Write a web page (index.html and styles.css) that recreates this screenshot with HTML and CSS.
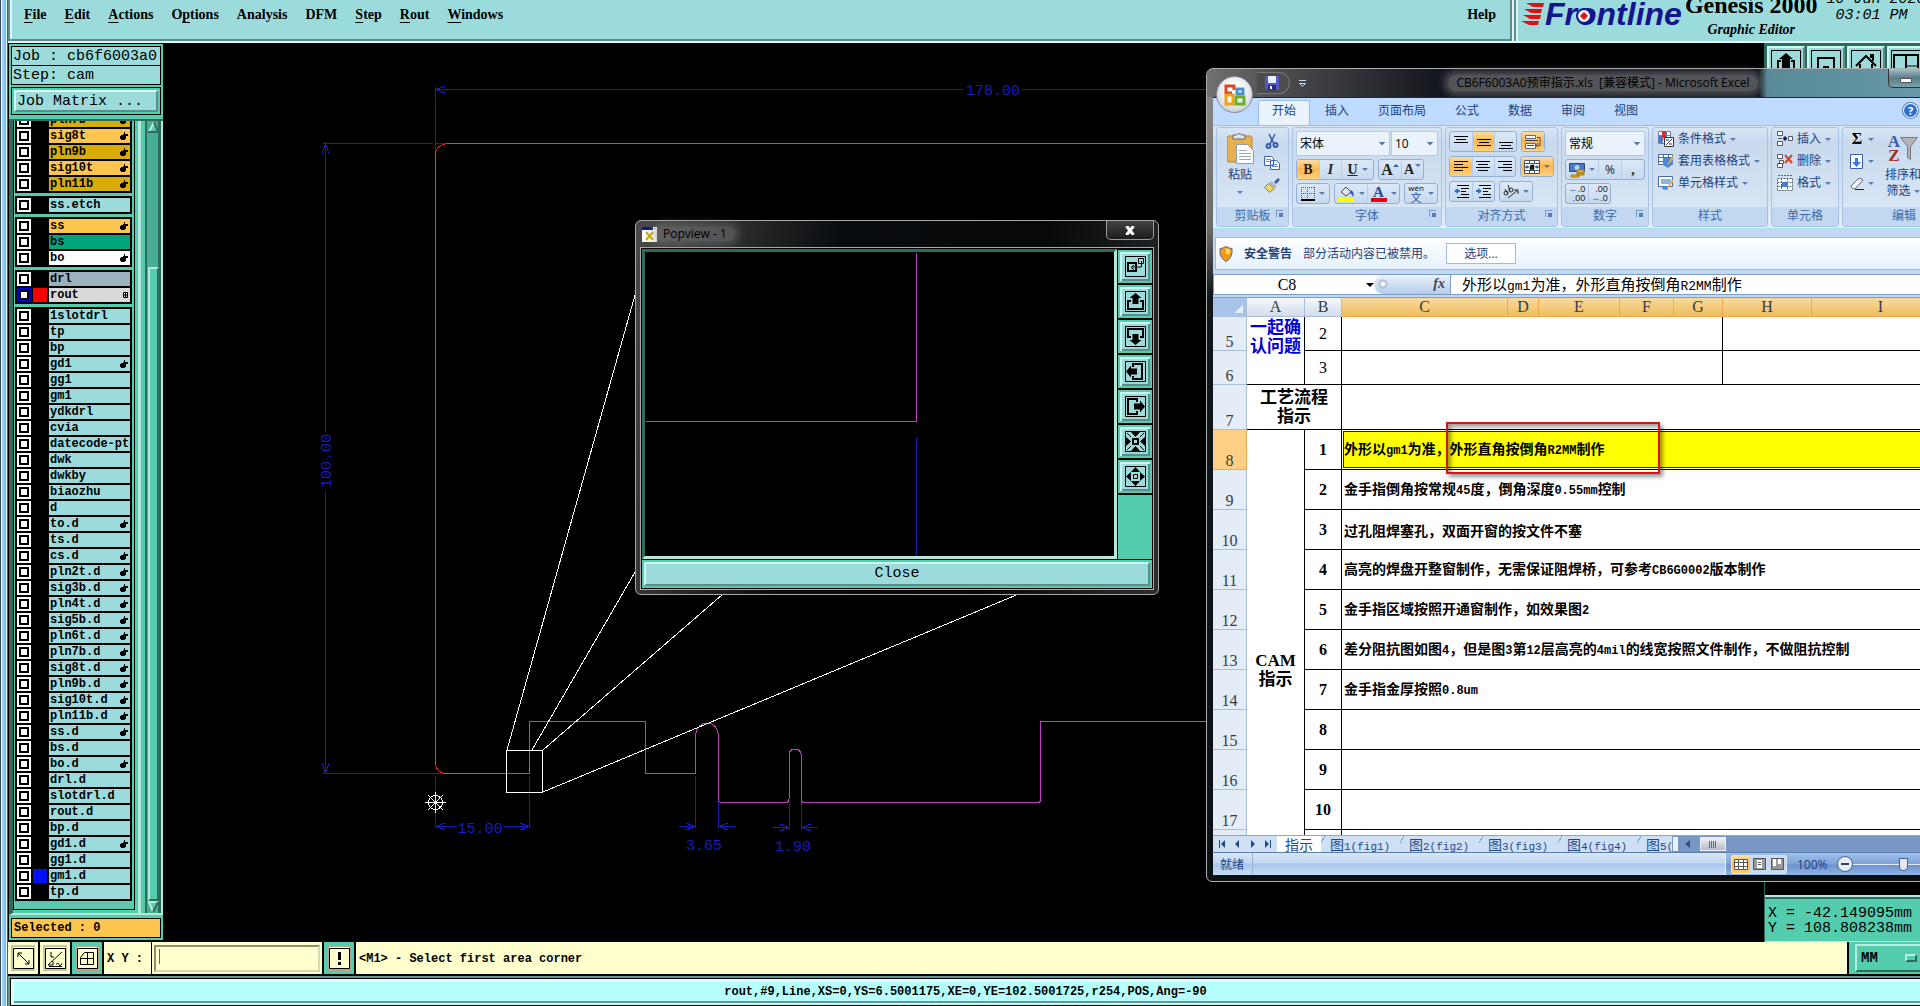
FILE: index.html
```
<!DOCTYPE html>
<html lang="zh-CN">

<head>
    <meta charset="UTF-8">
    <meta name="viewport" content="width=device-width, initial-scale=1.0">
    <title>Genesis 2000 - Graphic Editor</title>
    <link rel="stylesheet" href="styles.css">
</head>

<body>
    <div class="edge"></div>
    <div class="app">
        <header>
            <nav class="menubar">
                <a href="#"><u>F</u>ile</a>
                <a href="#"><u>E</u>dit</a>
                <a href="#"><u>A</u>ctions</a>
                <a href="#">O<u>p</u>tions</a>
                <a href="#">Analysis</a>
                <a href="#">DFM</a>
                <a href="#"><u>S</u>tep</a>
                <a href="#"><u>R</u>out</a>
                <a href="#"><u>W</u>indows</a>
                <a href="#" class="help">Help</a>
            </nav>
            <div class="brand">
                <div class="logo">
                    <svg width="24" height="24" viewBox="0 0 24 24">
                        <path fill="#e01010" d="M5 1h18l-1 4H12zM3 7h18l-1 4H10zM2 13h18l-1 4H9zM0 19h18l-1 4H8z" />
                    </svg>
                    <span>Frontline</span>
                    <svg class="dot" width="16" height="16" viewBox="0 0 16 16">
                        <circle cx="8" cy="8" r="7" fill="#e8f6f6" stroke="#14148c" stroke-width="2" />
                        <path fill="#e01010" d="M8 4l4 4-4 4-4-4z" />
                    </svg>
                </div>
                <div class="product">
                    <h1>Genesis 2000</h1>
                    <p>Graphic Editor</p>
                </div>
                <div class="clock">
                    <p>10 Jun 2020</p>
                    <p>03:01 PM</p>
                </div>
            </div>
        </header>

        <main>
            <aside class="sidebar">
                <p class="field">Job : cb6f6003a0</p>
                <p class="field">Step: cam</p>
                <div class="matrix"><button type="button">Job Matrix ...</button></div>
                <div class="layers">
                    <div class="view"></div>
                    <div class="track">
                        <svg width="11" height="12" viewBox="0 0 11 12">
                            <path fill="#54cdaf" d="M5.500 0L11 12H0z" />
                            <path fill="none" stroke="#b5efdf" stroke-width="2" d="M6 1L1 11" />
                            <path fill="none" stroke="#2f6b5c" stroke-width="2" d="M6 1l4 10H0" />
                        </svg>
                        <span class="thumb"></span>
                        <svg width="11" height="12" viewBox="0 0 11 12">
                            <path fill="#54cdaf" d="M0 0h11L5.500 12z" />
                            <path fill="none" stroke="#b5efdf" stroke-width="2" d="M10 1H1l4 10" />
                            <path fill="none" stroke="#2f6b5c" stroke-width="2" d="M5 11l5-10" />
                        </svg>
                    </div>
                </div>
                <p class="selected">Selected : 0</p>
            </aside>

            <section class="canvas">
                <svg class="board" width="100%" height="100%">
                    <g transform="translate(-163 -43)" fill="none" shape-rendering="crispEdges">
                        <!-- dimensions -->
                        <g stroke="#1a1ac0">
                            <path d="M435.500 87v65M435 89.500h529M1022 89.500h500M445 86l-9 3.500 9 3.500" />
                            <path d="M323 143.500h110M435 143.500h12M325.500 144v288M325.500 491v282M322 154l3.500-10 3.500 10M322 763l3.500 10 3.500-10M323 773.500h122" />
                            <path d="M435.500 776v52M529.500 776v52M436 826.500h21M503 826.500h26M445 823l-9 3.500 9 3.500M520 823l9 3.500-9 3.500" />
                            <path d="M695.500 776v52M718.500 800v28M679 826.500h16M719 826.500h16M686 823l9 3.500-9 3.500M728 823l-9 3.500 9 3.500" />
                            <path d="M789.500 800v30M801.500 800v30M773 827.500h16M802 827.500h16M780 824l9 3.500-9 3.500M811 824l-9 3.500 9 3.500" />
                        </g>
                        <!-- board outline -->
                        <path stroke="#c03cc0" d="M447 143.500h1100M435.500 153v611M444 773.500h85.500v-52h116v52h50V738c0-8 4-15 11.500-15s11.500 7 11.500 13v63q0 3.500 3 3.500h64q3.500 0 3.500-3.500v-45c0-3 3-5 6-5s6 2 6 5v45q0 3.500 3.500 3.500h233q3 0 3-3v-78h500" />
                        <path stroke="#d02020" d="M435.500 153q1-8 12-9.500M435.500 764q1 8 9 9.500" />
                        <!-- zoom area -->
                        <path stroke="#fff" d="M506.500 750.500h36v42h-36zM507 750L646 256M532 750L664 522M543 750L760 562M543 792L1050 581" />
                        <!-- datum -->
                        <path stroke="#fff" d="M425 802.500h21M428 795l15 15M443 795l-15 15" />
                        <circle cx="435.500" cy="802.500" r="7" stroke="#fff" />
                        <path stroke="#ffff40" d="M435.500 792v21" />
                    </g>
                    <g transform="translate(-163 -43)" class="dims">
                        <text x="993" y="95">178.00</text>
                        <text x="480" y="833">15.00</text>
                        <text x="704" y="850">3.65</text>
                        <text x="793" y="851">1.90</text>
                        <text transform="translate(331 461) rotate(-90)">100.00</text>
                    </g>
                </svg>
            </section>

            <aside class="right">
                <div class="tools">
                    <button type="button" aria-label="Pan up"><svg width="30" height="30" viewBox="0 0 30 30"><path fill="none" stroke="#000" d="M.5.500h29v29H.5z" /><path fill="none" stroke="#000" stroke-width="2" d="M10 11H7v14h16V11h-3" /><path d="M15 3l7 6h-3v9h-8V9H8z" /></svg></button>
                    <button type="button" aria-label="Pan down"><svg width="30" height="30" viewBox="0 0 30 30"><path fill="none" stroke="#000" d="M.5.500h29v29H.5z" /><path fill="none" stroke="#000" stroke-width="2" d="M11 21H7V8h16v13h-4" /><path d="M15 28l6-6h-3v-6h-6v6H9z" /></svg></button>
                    <button type="button" aria-label="Home"><svg width="30" height="30" viewBox="0 0 30 30"><path fill="none" stroke="#000" d="M.5.500h29v29H.5z" /><path fill="none" stroke="#000" stroke-width="2" d="M5 16L15 6l10 10M9 14v11h12V14M20 8V5h2v6" /></svg></button>
                    <button type="button" aria-label="Split view"><svg width="30" height="30" viewBox="0 0 30 30"><path fill="none" stroke="#000" d="M.5.500h29v29H.5zM16 16h12M16 20h12" /><path fill="none" stroke="#000" stroke-width="2" d="M3 5h24v20H3zM15 5v20" /></svg></button>
                </div>
                <div class="coords">
                    <p>X = -42.149095mm</p>
                    <p>Y = 108.808238mm</p>
                </div>
            </aside>
        </main>

        <div class="command">
            <button type="button" aria-label="Snap to line"><svg width="21" height="21" viewBox="0 0 21 21"><path fill="none" stroke="#000" d="M.5.500h20v20H.5zM5 5l11 11M5 9V5h4M16 12v4h-4" /></svg></button>
            <button type="button" aria-label="Snap to angle"><svg width="21" height="21" viewBox="0 0 21 21"><path fill="none" stroke="#000" d="M.5.500h20v20H.5zM3 17L17 4M3 17h5q1-3-1-4M6 4v5h3M11 16.500q2-3 3 0t3-1M4 18.500h13" /></svg></button>
            <button type="button" class="on" aria-label="Snap to grid"><svg width="21" height="21" viewBox="0 0 21 21"><path fill="none" stroke="#000" d="M.5.500h20v20H.5zM3.500 9.500l4-5h9v12h-13zM3 10.500h14M10.500 4v13" /></svg></button>
            <label for="xy">X Y :</label>
            <div class="entry"><input id="xy" type="text"></div>
            <button type="button" class="on bang" aria-label="Alert"><svg width="21" height="21" viewBox="0 0 21 21"><path fill="none" stroke="#000" d="M.5.500h20v20H.5z" /><path d="M9 4h3v8H9zM9 14h3v3H9z" /></svg></button>
            <p class="prompt">&lt;M1&gt; - Select first area corner</p>
            <div class="units">
                <select aria-label="Units">
                    <option>MM</option>
                    <option>INCH</option>
                </select>
                <span class="knob"></span>
            </div>
        </div>

        <footer>
            <p>rout,#9,Line,XS=0,YS=6.5001175,XE=0,YE=102.5001725,r254,POS,Ang=-90</p>
        </footer>
    </div>

    <!-- Popview -->
    <section class="popview">
        <div class="pop_title">
            <svg width="15" height="15" viewBox="0 0 15 15"><path fill="#fff" d="M0 0h15v15H0z" /><path fill="#14148c" d="M0 0h11v3H0z" /><path fill="#aab" d="M12 1h2v1h-2z" /><path stroke="#c8b400" stroke-width="2" d="M4 5l7 8M11 5l-7 8" /></svg>
            <h2>Popview - 1</h2>
            <button type="button" aria-label="Close window"><svg width="10" height="9" viewBox="0 0 10 9"><path stroke="#fff" stroke-width="3" d="M1.500 0l7 9M8.500 0l-7 9" /></svg></button>
        </div>
        <div class="pop_body">
            <div class="pop_main">
                <div class="pop_view">
                    <svg width="100%" height="100%" shape-rendering="crispEdges" fill="none">
                        <path stroke="#c03cc0" d="M1 169.500h270.500V1" />
                        <path stroke="#1a1ab0" d="M271.500 186v200" />
                    </svg>
                </div>
                <div class="pop_tools">
                    <button type="button" aria-label="Zoom window"><svg width="21" height="21" viewBox="0 0 21 21"><path fill="none" stroke="#000" d="M.5.500h20v20H.5zM13.500 2.500h5v5h-5zM16.500 5v6h-9M9 9l-3 2.500 3 2" /><path fill="none" stroke="#000" stroke-width="2" d="M3 7h8v8H3z" /></svg></button>
                    <button type="button" aria-label="Up"><svg width="21" height="21" viewBox="0 0 21 21"><path fill="none" stroke="#000" d="M.5.500h20v20H.5z" /><path fill="none" stroke="#000" stroke-width="2" d="M6 10H3v8h15v-8h-3" /><path d="M10.500 2l6 5h-3v6h-6V7h-3z" /></svg></button>
                    <button type="button" aria-label="Down"><svg width="21" height="21" viewBox="0 0 21 21"><path fill="none" stroke="#000" d="M.5.500h20v20H.5z" /><path fill="none" stroke="#000" stroke-width="2" d="M6 11H3V3h15v8h-3" /><path d="M10.500 19l6-5h-3V8h-6v6h-3z" /></svg></button>
                    <button type="button" aria-label="Left"><svg width="21" height="21" viewBox="0 0 21 21"><path fill="none" stroke="#000" d="M.5.500h20v20H.5z" /><path fill="none" stroke="#000" stroke-width="2" d="M8 6V3h9v15H8v-3" /><path d="M1 10.500l5-6v3h6v6H6v3z" /></svg></button>
                    <button type="button" aria-label="Right"><svg width="21" height="21" viewBox="0 0 21 21"><path fill="none" stroke="#000" d="M.5.500h20v20H.5z" /><path fill="none" stroke="#000" stroke-width="2" d="M12 6V3H3v15h9v-3" /><path d="M20 10.500l-5-6v3H9v6h6v3z" /></svg></button>
                    <button type="button" aria-label="Zoom in"><svg width="21" height="21" viewBox="0 0 21 21"><path fill="none" stroke="#000" d="M.5.500h20v20H.5zM2 2l4 4M19 2l-4 4M2 19l4-4M19 19l-4-4" /><path fill="none" stroke="#000" stroke-width="2" d="M8 8h5v5H8z" /><path d="M6 1h9l-4.500 5zM6 20h9l-4.500-5zM1 6v9l5-4.500zM20 6v9l-5-4.500z" /></svg></button>
                    <button type="button" aria-label="Zoom out"><svg width="21" height="21" viewBox="0 0 21 21"><path fill="none" stroke="#000" d="M.5.500h20v20H.5zM8.500 8.500h4v4h-4z" /><path d="M6 6h9l-4.500-5zM6 15h9l-4.500 5zM6 6v9l-5-4.500zM15 6v9l5-4.500z" /></svg></button>
                </div>
            </div>
            <div class="pop_close"><button type="button">Close</button></div>
        </div>
    </section>

    <!-- Excel -->
    <section class="excel">
        <div class="xl_title">
            <div class="qat">
                <button type="button" aria-label="保存"><svg width="14" height="14" viewBox="0 0 14 14"><path fill="#5558c0" d="M0 0h14v14H2l-2-2z" /><path fill="#e8f0ff" d="M3 0h8v7H3z" /><path fill="#2a2c80" d="M3 9h8v5H3z" /><path fill="#fff" d="M5 10h2v3H5z" /></svg></button>
                <svg class="more" width="9" height="9" viewBox="0 0 9 9"><path fill="none" stroke="#cde" d="M1 1.500h7M1.500 4.500h6l-3 3z" /></svg>
            </div>
            <h2>CB6F6003A0预审指示.xls &nbsp;[兼容模式] - Microsoft Excel</h2>
            <div class="winbtns">
                <button type="button" aria-label="最小化"><svg width="12" height="5" viewBox="0 0 12 5"><path fill="#fff" stroke="#555" d="M.5.500h11v4H.5z" /></svg></button>
                <button type="button" aria-label="最大化"></button>
                <button type="button" aria-label="关闭"></button>
            </div>
        </div>
        <button type="button" class="office" aria-label="Office">
            <svg width="24" height="24" viewBox="0 0 24 24" fill="none" stroke-width="3">
                <path stroke="#d8481c" d="M9 10H3V3h8v4" />
                <path stroke="#4a90d0" d="M14 6h6v5h-6z" />
                <path stroke="#f0a020" d="M3 12h7v9H3z" />
                <path stroke="#6ab02c" d="M13 14h8v7h-8z" />
            </svg>
        </button>

        <nav class="tabs">
            <a href="#" class="on">开始</a>
            <a href="#">插入</a>
            <a href="#">页面布局</a>
            <a href="#">公式</a>
            <a href="#">数据</a>
            <a href="#">审阅</a>
            <a href="#">视图</a>
            <span class="q">?</span>
        </nav>

        <div class="ribbon">
            <div class="group clip">
                <div class="body">
                    <button type="button" class="big">
                        <svg width="27" height="31" viewBox="0 0 27 31"><rect y="3" width="25" height="26" rx="2" fill="#e9b04e" stroke="#b9812c" /><path fill="#e4e8ee" stroke="#667" d="M6 2h3q3-3 6 0h3v4H6z" /><path fill="#fff" stroke="#8a9ab8" d="M9.500 11.500h11l6 6v13h-17z" /><path stroke="#9ab" d="M12 17.500h8M12 20.500h12M12 23.500h12M12 26.500h12" /></svg>
                        <span>粘贴</span>
                        <i class="ar"></i>
                    </button>
                    <div class="stack">
                        <button type="button" aria-label="剪切"><svg width="16" height="16" viewBox="0 0 16 16" fill="none" stroke="#3a5ca8"><path stroke-width="1.500" d="M5 1l5 10M11 1L6 11" /><circle cx="4.500" cy="13" r="2" stroke-width="2" /><circle cx="11.500" cy="12" r="2" stroke-width="2" /></svg></button>
                        <button type="button" aria-label="复制"><svg width="16" height="16" viewBox="0 0 16 16"><path fill="#fff" stroke="#3a64b0" d="M.5 1.500h7l2 2v7h-9zM6.500 5.500h6l3 3v6h-9z" /><path stroke="#6a8cd0" d="M2 4.500h5M2 6.500h4M8 9.500h5M8 11.500h6" /></svg></button>
                        <button type="button" aria-label="格式刷"><svg width="16" height="16" viewBox="0 0 16 16"><path fill="#4a5a9a" d="M10 5l4-4 2 2-4 4z" /><path fill="#aab8d8" d="M7 4l6 5-2 2-6-5z" /><path fill="#f0d868" stroke="#a08020" d="M4.500 6.500l6 5-5 4-5-5z" /></svg></button>
                    </div>
                </div>
                <p>剪贴板<i class="dlg"></i></p>
            </div>

            <div class="group font">
                <div class="body col">
                    <div class="line tall">
                        <select aria-label="字体"><option>宋体</option></select>
                        <select aria-label="字号" class="size"><option>10</option></select>
                    </div>
                    <div class="line">
                        <div class="set">
                            <button type="button" class="hot"><b>B</b></button>
                            <button type="button"><b><em>I</em></b></button>
                            <button type="button" class="wide"><b><u>U</u></b><i class="ar"></i></button>
                        </div>
                        <div class="set">
                            <button type="button"><b class="lg">A</b><i class="ar up"></i></button>
                            <button type="button"><b>A</b><i class="ar raise"></i></button>
                        </div>
                    </div>
                    <div class="line between">
                        <div class="set">
                            <button type="button" class="wide" aria-label="边框"><svg width="14" height="14" viewBox="0 0 14 14" fill="none" stroke="#556"><path stroke-dasharray="1 1" d="M.5 0v13M6.500 0v13M13.500 0v13M0 .5h14M0 6.500h14" /><path stroke="#000" stroke-width="2" d="M0 13h14" /></svg><i class="ar"></i></button>
                        </div>
                        <div class="set">
                            <button type="button" class="wide" aria-label="填充颜色"><svg width="17" height="17" viewBox="0 0 17 17"><path fill="#dfe6f2" stroke="#445" d="M3 7l5-5 5 5-5 4z" /><path fill="#3a5cb0" d="M13 5q4 2 2 7-1-3-3-4z" /><path fill="#ff0" d="M0 13h16v4H0z" /></svg><i class="ar"></i></button>
                            <button type="button" class="wide" aria-label="字体颜色"><span class="fc">A</span><i class="ar"></i></button>
                        </div>
                        <div class="set">
                            <button type="button" class="wide"><span class="wen"><small>wén</small>文</span><i class="ar"></i></button>
                        </div>
                    </div>
                </div>
                <p>字体<i class="dlg"></i></p>
            </div>

            <div class="group align">
                <div class="body col">
                    <div class="line">
                        <div class="set">
                            <button type="button" aria-label="顶端对齐"><svg width="14" height="14" viewBox="0 0 14 14"><path stroke="#000" d="M0 1.500h14M2 4.500h10M0 7.500h14" /></svg></button>
                            <button type="button" class="hot" aria-label="垂直居中"><svg width="14" height="14" viewBox="0 0 14 14"><path stroke="#000" d="M0 4.500h14M2 7.500h10M0 10.500h14" /></svg></button>
                            <button type="button" aria-label="底端对齐"><svg width="14" height="14" viewBox="0 0 14 14"><path stroke="#000" d="M0 7.500h14M2 10.500h10M0 13.500h14" /></svg></button>
                        </div>
                        <div class="set"><button type="button" class="hot" aria-label="自动换行"><svg width="16" height="16" viewBox="0 0 16 16"><path fill="#fff" stroke="#667" d="M.5 1.500h10v3H.5zM.5 9.500h10v5H.5z" /><path fill="none" stroke="#445" d="M12 3.500h3v8h-3M2 11.500h7M13 9l-2 2.500 2 2M0 6.500h13" /></svg></button></div>
                    </div>
                    <div class="line">
                        <div class="set">
                            <button type="button" class="hot" aria-label="左对齐"><svg width="14" height="14" viewBox="0 0 14 14"><path stroke="#000" d="M0 1.500h14M0 4.500h9M0 7.500h14M0 10.500h9" /></svg></button>
                            <button type="button" aria-label="居中"><svg width="14" height="14" viewBox="0 0 14 14"><path stroke="#000" d="M0 1.500h14M2 4.500h10M0 7.500h14M2 10.500h10" /></svg></button>
                            <button type="button" aria-label="右对齐"><svg width="14" height="14" viewBox="0 0 14 14"><path stroke="#000" d="M0 1.500h14M5 4.500h9M0 7.500h14M5 10.500h9" /></svg></button>
                        </div>
                        <div class="set"><button type="button" class="hot wide" aria-label="合并后居中"><svg width="16" height="14" viewBox="0 0 16 14"><path fill="#fff" stroke="#456" d="M.5.500h15v13H.5zM.5 3.500h15M.5 10.500h15M5.500 0v3M10.500 0v3M5.500 11v3M10.500 11v3" /><path stroke="#124" d="M1 7h4M11 7h4M3 5.500v3M13 5.500v3" /><path fill="none" stroke="#000" stroke-width="1.500" d="M6.500 5.500h3v3.500h-3v-2h3" /></svg><i class="ar"></i></button></div>
                    </div>
                    <div class="line">
                        <div class="set">
                            <button type="button" aria-label="减少缩进"><svg width="15" height="13" viewBox="0 0 15 13"><path stroke="#000" d="M3 .5h12M7 3.500h8M7 6.500h5M7 9.500h8M3 12.500h12" /><path fill="#3a6cc8" d="M0 6l4-3v2h2v2H4v2z" /></svg></button>
                            <button type="button" aria-label="增加缩进"><svg width="15" height="13" viewBox="0 0 15 13"><path stroke="#000" d="M3 .5h12M7 3.500h8M7 6.500h5M7 9.500h8M3 12.500h12" /><path fill="#3a6cc8" d="M6 6L2 3v2H0v2h2v2z" /></svg></button>
                        </div>
                        <div class="set"><button type="button" class="wide" aria-label="方向"><svg width="16" height="14" viewBox="0 0 16 14" fill="none" stroke="#223"><path d="M5 13L15 5M15 9V5h-4" /><circle cx="3" cy="8" r="2" /><circle cx="8" cy="5" r="2" /><path d="M2 4l3 5M5 0l2 6" /></svg><i class="ar"></i></button></div>
                    </div>
                </div>
                <p>对齐方式<i class="dlg"></i></p>
            </div>

            <div class="group num">
                <div class="body col">
                    <div class="line tall"><select aria-label="数字格式"><option>常规</option></select></div>
                    <div class="line">
                        <div class="set grow">
                            <button type="button" class="wide" aria-label="会计数字格式"><svg width="16" height="16" viewBox="0 0 16 16"><path fill="#4a78c8" stroke="#2a4a90" d="M.5 1.500h15v8H.5z" /><circle cx="8" cy="5.500" r="2.500" fill="#bcd0f4" /><path fill="#f0b830" stroke="#a87810" d="M8 8h7v3H8zM8 11h7v2H8zM2 13h8v2H2z" /></svg><i class="ar"></i></button>
                            <button type="button">%</button>
                            <button type="button"><b>,</b></button>
                        </div>
                    </div>
                    <div class="line">
                        <div class="set">
                            <button type="button"><span class="dec"><span><s>←</s>.0</span><span>.00</span></span></button>
                            <button type="button"><span class="dec"><span>.00</span><span><s>→</s>.0</span></span></button>
                        </div>
                    </div>
                </div>
                <p>数字<i class="dlg"></i></p>
            </div>

            <div class="group style">
                <div class="body list">
                    <button type="button"><svg width="16" height="16" viewBox="0 0 16 16"><path fill="#fff" stroke="#6a86b8" d="M.5.500h12v12H.5zM4.500 0v12M8.500 0v12M0 4.500h12M0 8.500h12" /><path fill="#d83020" d="M4 0h4v7H4z" /><path fill="#4878c8" d="M1 5h3v7H1z" /><path fill="#fff" stroke="#334" d="M6.500 6.500h9v9h-9z" /><path stroke="#334" d="M8 9h3M11 13h3M8 14l6-6" /></svg>条件格式<i class="ar"></i></button>
                    <button type="button"><svg width="16" height="16" viewBox="0 0 16 16"><path fill="#fff" stroke="#4a6aa8" d="M.5 1.500h14v10H.5zM5.500 1v10M10.500 1v10M0 4.500h14M0 8.500h14" /><path fill="#4a88d8" d="M5 5h10v6l-5 4-5-3z" /><path fill="#e8b040" d="M14 3l2 2-5 6-2 1z" /></svg>套用表格格式<i class="ar"></i></button>
                    <button type="button"><svg width="16" height="16" viewBox="0 0 16 16"><path fill="#fff" stroke="#4a6aa8" d="M.5 1.500h14v10H.5z" /><path fill="#88b4e8" d="M3 4h10v5H3z" /><path fill="#4a88d8" d="M5 11h6l-2 4-5-1z" /><path fill="#e8b040" d="M14 4l2 2-5 6-2 1z" /></svg>单元格样式<i class="ar"></i></button>
                </div>
                <p>样式</p>
            </div>

            <div class="group cells">
                <div class="body list">
                    <button type="button"><svg width="16" height="16" viewBox="0 0 16 16" fill="#fff" stroke="#556"><path d="M.5.500h5v4h-5zM.5 10.500h5v4h-5zM1 7.500h4M11.500 5.500h4v4h-4z" /><path stroke="#125" stroke-width="2" d="M6 7.500h4M8 5.500v4" /></svg>插入<i class="ar"></i></button>
                    <button type="button"><svg width="16" height="16" viewBox="0 0 16 16" fill="#fff" stroke="#556"><path d="M.5 1.500h5v4h-5zM.5 10.500h5v4h-5zM2.500 7.500h4v3h-4z" /><path stroke="#e04020" stroke-width="2" d="M8 2l7 8M15 2L8 10" /></svg>删除<i class="ar"></i></button>
                    <button type="button"><svg width="16" height="16" viewBox="0 0 16 16" fill="#fff" stroke="#567"><path d="M.5 3.500h15v12H.5zM.5 7.500h15M.5 11.500h15M4.500 3v12M10.500 3v12M1 .5h14" stroke-dasharray="2 1" /><path fill="#4a80d0" stroke="none" d="M5 7h6v5H5z" /></svg>格式<i class="ar"></i></button>
                </div>
                <p>单元格</p>
            </div>

            <div class="group edit">
                <div class="body">
                    <div class="list">
                        <button type="button"><b class="sum">Σ</b><i class="ar"></i></button>
                        <button type="button" aria-label="填充"><svg width="14" height="15" viewBox="0 0 14 15"><path fill="#fff" stroke="#3a5ca8" d="M.5.500h12v14H.5z" /><path fill="#3a78d8" d="M5 4h3v4h3l-4.500 5L2 8h3z" /></svg><i class="ar"></i></button>
                        <button type="button" aria-label="清除"><svg width="14" height="13" viewBox="0 0 14 13"><path fill="#f4f4f8" stroke="#667" d="M1 9l7-7q3-2 5 1l-7 8q-4 2-5-2z" /><path stroke="#223" d="M5 12.500h9" /></svg><i class="ar"></i></button>
                    </div>
                    <button type="button" class="big sort">
                        <span class="az"><span><b>A</b><b>Z</b></span><svg width="18" height="24" viewBox="0 0 18 24"><path fill="#b4b4b8" stroke="#77777c" d="M.5.500h17l-7 9v13l-3-2V9.500z" /></svg></span>
                        <span>排序和</span>
                        <span class="pick">筛选<i class="ar"></i></span>
                    </button>
                </div>
                <p>编辑</p>
            </div>
        </div>

        <div class="warn">
            <svg width="14" height="16" viewBox="0 0 14 16"><path fill="#f79a1c" stroke="#667" d="M7 .5q3 2 6 2 1 9-6 13Q0 11.500 1 2.500q3 0 6-2z" /><path fill="#ffd45c" d="M7 2q2 1 4 1.500V8H7z" /></svg>
            <strong>安全警告</strong>
            <span>部分活动内容已被禁用。</span>
            <button type="button">选项...</button>
        </div>

        <div class="formula">
            <div class="name"><input type="text" value="C8" aria-label="名称框"><i class="ar"></i></div>
            <div class="fx"><em>fx</em></div>
            <p>外形以<span class="en">gm1</span>为准，外形直角按倒角<span class="en">R2MM</span>制作</p>
        </div>

        <div class="sheet">
            <table>
                <colgroup>
                    <col class="c0"><col class="ca"><col class="cb"><col class="cc"><col class="cd"><col class="ce"><col class="cf"><col class="cg"><col class="ch"><col class="ci"><col>
                </colgroup>
                <thead>
                    <tr><th class="corner"></th><th>A</th><th>B</th><th class="sel">C</th><th class="sel">D</th><th class="sel">E</th><th class="sel">F</th><th class="sel">G</th><th class="sel">H</th><th class="sel">I</th><th></th></tr>
                </thead>
                <tbody>
                    <tr class="short"><th>5</th><td class="blue" rowspan="2">一起确<br>认问题</td><td>2</td><td colspan="5"></td><td colspan="3"></td></tr>
                    <tr class="short"><th>6</th><td>3</td><td colspan="5"></td><td colspan="3"></td></tr>
                    <tr class="flow"><th>7</th><td class="bold" colspan="2">工艺流程<br>指示</td><td colspan="8"></td></tr>
                    <tr class="cur"><th>8</th><td class="bold" rowspan="11">CAM<br>指示</td><td>1</td><td colspan="8" class="txt active">外形以<span class="en">gm1</span>为准，外形直角按倒角<span class="en">R2MM</span>制作</td></tr>
                    <tr><th>9</th><td>2</td><td colspan="8" class="txt">金手指倒角按常规<span class="en">45</span>度，倒角深度<span class="en">0.55mm</span>控制</td></tr>
                    <tr><th>10</th><td>3</td><td colspan="8" class="txt">过孔阻焊塞孔，双面开窗的按文件不塞</td></tr>
                    <tr><th>11</th><td>4</td><td colspan="8" class="txt">高亮的焊盘开整窗制作，无需保证阻焊桥，可参考<span class="en">CB6G0002</span>版本制作</td></tr>
                    <tr><th>12</th><td>5</td><td colspan="8" class="txt">金手指区域按照开通窗制作，如效果图<span class="en">2</span></td></tr>
                    <tr><th>13</th><td>6</td><td colspan="8" class="txt">差分阻抗图如图<span class="en">4</span>，但是图<span class="en">3</span>第<span class="en">12</span>层高亮的<span class="en">4mil</span>的线宽按照文件制作，不做阻抗控制</td></tr>
                    <tr><th>14</th><td>7</td><td colspan="8" class="txt">金手指金厚按照<span class="en">0.8um</span></td></tr>
                    <tr><th>15</th><td>8</td><td colspan="8"></td></tr>
                    <tr><th>16</th><td>9</td><td colspan="8"></td></tr>
                    <tr><th>17</th><td>10</td><td colspan="8"></td></tr>
                    <tr class="rest"><th></th><td></td><td colspan="8"></td></tr>
                </tbody>
            </table>
            <div class="mark"></div>
        </div>

        <div class="sheets">
            <div class="arrows">
                <svg width="64" height="16" viewBox="0 0 64 16" fill="#1d4a8c"><path d="M6 4h1v8H6zM12 4v8L8 8zM26 4v8l-4-4zM38 4v8l4-4zM52 4v8l4-4zM57 4h1v8h-1z" /></svg>
            </div>
            <a href="#" class="on">指示</a>
            <a href="#">图<span class="en">1(fig1)</span></a>
            <a href="#">图<span class="en">2(fig2)</span></a>
            <a href="#">图<span class="en">3(fig3)</span></a>
            <a href="#">图<span class="en">4(fig4)</span></a>
            <a href="#" class="cut">图<span class="en">5(</span></a>
            <div class="hscroll"><i class="split"></i><i class="la"></i><i class="hthumb"></i></div>
        </div>

        <div class="status">
            <span class="ready">就绪</span>
            <div class="zoom">
                <div class="views">
                    <button type="button" class="hot" aria-label="普通"><svg width="14" height="11" viewBox="0 0 14 11"><path fill="#fff" stroke="#555" d="M.5.500h13v10H.5zM.5 3.500h13M.5 7.500h13M4.500 0v11M9.500 0v11" /></svg></button>
                    <button type="button" aria-label="页面布局"><svg width="13" height="12" viewBox="0 0 13 12"><path fill="#999" stroke="#555" d="M.5.500h12v11H.5z" /><path fill="#fff" d="M4 2h5v8H4z" /><path stroke="#555" d="M5 4.500h3M5 6.500h3" /></svg></button>
                    <button type="button" aria-label="分页预览"><svg width="13" height="12" viewBox="0 0 13 12"><path fill="#999" stroke="#555" d="M.5.500h12v11H.5z" /><path fill="#fff" d="M2 1h3v7H2zM7 1h3v5H7z" /></svg></button>
                </div>
                <span>100%</span>
                <button type="button" class="minus" aria-label="缩小"></button>
                <input type="range" min="0" max="100" value="50" aria-label="显示比例">
            </div>
        </div>
    </section>
    <script src="script.js"></script>
</body>

</html>
```
FILE: styles.css
```
@charset "utf-8";

* {
    margin: 0;
    padding: 0;
    box-sizing: border-box;
}

a {
    text-decoration: none;
    color: inherit;
}

button,
select,
input {
    font: inherit;
    color: inherit;
    border: 0;
    background: none;
    border-radius: 0;
    appearance: none;
    outline: 0;
}

svg {
    display: block;
    flex: none;
}

body {
    display: flex;
    height: 100vh;
    overflow: hidden;
    position: relative;
    background: #000;
    color: #000;
    font: 12px/16px "Liberation Mono", monospace;
}

.edge {
    width: 8px;
    background: linear-gradient(90deg, #3b4c68 0 1px, #e4f6ff 1px 2px, #9fd4f2 2px 4px, #7fbfe8 4px 6px, #e4f6ff 6px 7px, #4a6070 7px);
}

.app {
    flex: 1;
    min-width: 0;
    display: flex;
    flex-direction: column;
}

/* header */
header {
    height: 43px;
    display: flex;
    background: #dff6f4;
}

.menubar,
.brand {
    height: 41px;
    background: #9cdbdb;
    border-left: 2px solid #5c8c8c;
    box-shadow: inset 2px 0 #dff6f4;
}

.menubar {
    flex: 1;
    display: flex;
    gap: 18px;
    padding: 6px 14px 0 14px;
    border-bottom: 2px solid #5c8c8c;
    border-right: 2px solid #5c8c8c;
    font: bold 14px/18px "Liberation Serif", serif;
}

.menubar u {
    text-underline-offset: 3px;
}

.menubar .help {
    margin-left: auto;
}

.brand {
    width: 406px;
    margin-left: 2px;
    display: flex;
    overflow: hidden;
}

.logo {
    position: relative;
    display: flex;
    padding: 2px 0 0 5px;
    font: italic bold 32px/24px "Liberation Sans", sans-serif;
    color: #14148c;
}

.logo .dot {
    position: absolute;
    left: 60px;
    top: 8px;
}

.product,
.clock {
    display: flex;
    flex-direction: column;
    justify-content: flex-end;
    white-space: nowrap;
}

.product {
    width: 140px;
    margin-left: 3px;
    padding-bottom: 1px;
    text-align: center;
}

.product h1 {
    font: bold 24px/24px "Liberation Serif", serif;
}

.product p {
    padding-top: 3px;
    font: italic bold 14px/20px "Liberation Serif", serif;
}

.clock {
    padding: 0 0 17px 9px;
    font: italic 15px/16px "Liberation Mono", monospace;
}

.clock p+p {
    padding-left: 9px;
}

/* workspace */
main {
    flex: 1;
    min-height: 0;
    display: flex;
}

.sidebar {
    width: 155px;
    display: flex;
    flex-direction: column;
    padding: 2px;
    background: #54cdaf;
    border-left: 1px solid #000;
    border-top: 1px solid #000;
    margin-bottom: 2px;
}

.field {
    height: 20px;
    margin-bottom: -1px;
    padding-left: 1px;
    background: #9cdbdb;
    border: 1px solid #000;
    font-size: 15px;
    line-height: 19px;
    white-space: nowrap;
}

.matrix {
    margin-top: 3px;
    padding: 2px;
    border: 1px solid #000;
}

.matrix button {
    display: block;
    width: 100%;
    height: 22px;
    padding-left: 1px;
    text-align: left;
    font-size: 15px;
    line-height: 17px;
    background: #9cdbdb;
    border: 2px solid;
    border-color: #dff6f4 #5c8c8c #5c8c8c #dff6f4;
}

.layers {
    flex: 1;
    min-height: 0;
    display: flex;
    margin: 4px -2px 3px;
    border-top: 2px solid #2f6b5c;
    border-left: 4px solid #2f6b5c;
    border-bottom: 2px solid #b5e8dc;
}

.view {
    width: 122px;
    min-height: 0;
    display: flex;
    flex-direction: column;
    justify-content: flex-end;
    gap: 3px;
    overflow: hidden;
    padding: 0 2px 8px 1px;
    margin-bottom: 3px;
    border: 1px solid #000;
    border-top: 0;
}

.batch {
    flex: none;
    display: flex;
    flex-direction: column;
    gap: 2px;
    padding: 2px;
    background: #000;
}

.layer {
    display: flex;
    gap: 2px;
    height: 14px;
}

.layer input {
    width: 14px;
    height: 14px;
    background: #fff;
    border: 2px solid #fff;
    box-shadow: inset 0 0 0 2px #000;
}

.layer.work input {
    border-color: #0000e0;
}

.swatch {
    width: 14px;
}

.name {
    flex: 1;
    display: flex;
    align-items: center;
    justify-content: space-between;
    min-width: 0;
    overflow: hidden;
    padding: 0 2px 0 1px;
    background: #9cdbdb;
    font-weight: bold;
    line-height: 14px;
    white-space: nowrap;
}

.signal .name { background: #ffc64f; }
.plane .name { background: #d9ac00; }
.green .name { background: #00a57c; }
.white .name { background: #fff; }
.drill .name { background: #9bb2be; }
.work .name { background: #dadada; }
.work .swatch { background: #f00; }
.shown .swatch { background: #0010ff; }

.track {
    flex: 1;
    display: flex;
    flex-direction: column;
    align-items: center;
    margin-left: 3px;
    border-left: 3px solid #b5e8dc;
    border-right: 2px solid #b5e8dc;
    background: linear-gradient(90deg, #54cdaf 0 4px, #2f6b5c 4px 6px, #48ad95 6px 17px, #2f6b5c 17px);
    padding-left: 5px;
}

.thumb {
    flex: 1;
    width: 11px;
    margin-top: 134px;
    background: #54cdaf;
    border: 2px solid;
    border-color: #b5e8dc #2f6b5c #2f6b5c #b5e8dc;
}

.selected {
    height: 20px;
    padding-left: 2px;
    line-height: 18px;
    font-weight: bold;
    background: #ffc64f;
    border: 1px solid #000;
}

.canvas {
    flex: 1;
    min-width: 0;
    overflow: hidden;
}

.dims text {
    fill: #1a1ac0;
    font-size: 15px;
    text-anchor: middle;
}

.right {
    width: 156px;
    display: flex;
    flex-direction: column;
    justify-content: space-between;
    border-left: 1px solid #2f6b5c;
}

.tools {
    display: flex;
    gap: 2px;
    padding: 3px 2px;
    background: #2f6b5c;
}

.tools button {
    display: flex;
    flex: none;
    align-items: center;
    justify-content: center;
    width: 38px;
    height: 38px;
    background: #9cdbdb;
    border: 2px solid;
    border-color: #c8f8f0 #5c8c8c #5c8c8c #c8f8f0;
}

.coords {
    height: 47px;
    padding: 9px 2px 0 3px;
    background: #54cdaf;
    border-top: 2px solid #b5e8dc;
    border-bottom: 1px solid #b5e8dc;
    box-shadow: inset 0 2px #2f6b5c;
    font-size: 15px;
    line-height: 15px;
    white-space: nowrap;
}

/* command line */
.command {
    height: 34px;
    display: flex;
    background: #ffffce;
    border-bottom: 2px solid #000;
    font-weight: bold;
}

.command>button {
    width: 32px;
    display: flex;
    align-items: center;
    justify-content: center;
    border-right: 2px solid #000;
    box-shadow: inset 3px 3px #ffffce, inset -3px -3px #ffffce, inset 0 0 0 5px #c8c8a0;
}

.command>button.on {
    box-shadow: inset 0 0 0 3px #54cdaf, inset 0 0 0 5px #b0a888;
}

.command label {
    width: 48px;
    padding: 9px 3px 0;
    border-right: 1px solid #000;
}

.entry {
    width: 172px;
    padding: 3px 2px;
    border-right: 2px solid #000;
}

.entry input {
    width: 100%;
    height: 27px;
    padding: 0 5px;
    border: 2px solid;
    border-color: #908c70 #d8d8b0 #d8d8b0 #908c70;
    font-weight: normal;
    background: #ffffce linear-gradient(#666, #666) 3px 2px / 1px 15px no-repeat;
}

.prompt {
    flex: 1;
    padding: 9px 3px 0;
}

.units {
    position: relative;
    width: 73px;
    padding: 2px 0 2px 6px;
    background: #54cdaf;
    border-left: 2px solid #000;
}

.units select {
    width: 80px;
    height: 28px;
    padding-left: 4px;
    border: 2px solid;
    border-color: #b5efdf #2f6b5c #2f6b5c #b5efdf;
    font-size: 14px;
}

.knob {
    position: absolute;
    right: 3px;
    top: 12px;
    width: 12px;
    height: 8px;
    border: 2px solid;
    border-color: #b5efdf #2f6b5c #2f6b5c #b5efdf;
}

footer {
    height: 30px;
    padding: 2px 0 0 2px;
    background: #6a9696;
    font-weight: bold;
    text-align: center;
}

footer p {
    height: 28px;
    line-height: 26px;
    background: #b5ffff;
    border: 1px solid #000;
    border-right: 0;
    box-shadow: inset 3px 3px #d8ffff, inset 0 -2px #b5ffff, inset 0 -4px #6a9696;
}

/* popview window */
.popview {
    position: absolute;
    left: 635px;
    top: 220px;
    width: 524px;
    padding: 0 4px 4px;
    border: 1px solid #a8a8a8;
    border-radius: 6px;
    background: linear-gradient(100deg, #4a4a4a, #0a0d10 35%, #060809 70%, #2c2f31);
}

.pop_title {
    height: 26px;
    display: flex;
    align-items: center;
    gap: 6px;
    padding-left: 2px;
}

.pop_title h2 {
    padding: 0 8px;
    margin-left: -8px;
    border-radius: 10px;
    background: rgba(140, 140, 140, 0.4);
    box-shadow: 0 0 8px 4px rgba(140, 140, 140, 0.4);
    font: 12px/14px "Open Sans", sans-serif;
}

.pop_title button {
    align-self: flex-start;
    display: flex;
    align-items: center;
    justify-content: center;
    width: 48px;
    height: 19px;
    margin-left: auto;
    border: 1px solid #999;
    border-top: 0;
    border-radius: 0 0 5px 5px;
    background: linear-gradient(#444, #1c1c1c);
}

.pop_body {
    border: 1px solid #a8a8a8;
    background: #000;
    padding: 1px;
}

.pop_main {
    display: flex;
    height: 310px;
}

.pop_view {
    flex: 1;
    border: 3px solid;
    border-color: #2f6b5c #b5e8dc #b5e8dc #2f6b5c;
}

.pop_tools {
    width: 34px;
    margin: 1px 0 0 1px;
    background: #54cdaf;
}

.pop_tools button {
    display: flex;
    align-items: center;
    justify-content: center;
    width: 34px;
    height: 35px;
    border-bottom: 2px solid #000;
    background: #9cdbdb;
    box-shadow: inset 0 0 0 2px #54cdaf, inset 4px 4px #c8f8f0, inset -4px -4px #5c8c8c;
}

.pop_close {
    padding: 2px;
    margin-top: 1px;
    background: #54cdaf;
}

.pop_close button {
    display: block;
    width: 100%;
    height: 24px;
    font-size: 15px;
    line-height: 20px;
    background: #9cdbdb;
    border: 2px solid;
    border-color: #c8f8f0 #5c8c8c #5c8c8c #c8f8f0;
}

/* excel window, runs past the right side of the screen */
.excel {
    position: absolute;
    left: 1206px;
    right: -80px;
    top: 68px;
    bottom: 124px;
    display: flex;
    flex-direction: column;
    padding: 0 6px 6px;
    border: 1px solid #a8b0b0;
    border-radius: 7px 7px 6px 6px;
    background:
        linear-gradient(90deg, #70706e, #4a4a4c 80px, rgba(0, 0, 0, 0) 240px) 0 0 / 100% 28px no-repeat,
        linear-gradient(90deg, #10131a calc(100% - 240px), #5a8a98 calc(100% - 232px), #6c9fae) 0 0 / 100% 28px no-repeat,
        linear-gradient(#8a8886, #6c6a68 160px, #11161a 226px, #0b1013);
    font: 12px/16px "Open Sans", "Noto Sans CJK SC", sans-serif;
    color: #1e3f7c;
}

.ar {
    display: inline-block;
    flex: none;
    width: 0;
    height: 0;
    border: 3px solid transparent;
    border-top: 3px solid #5a7cae;
    border-bottom: 0;
}

.xl_title {
    height: 28px;
    display: grid;
    grid-template-columns: 1fr auto 1fr;
    align-items: center;
    color: #000;
}

.xl_title h2 {
    padding: 0 8px;
    border-radius: 10px;
    background: rgba(150, 150, 150, 0.5);
    box-shadow: 0 0 8px 4px rgba(150, 150, 150, 0.5);
    font-size: 12px;
    font-weight: normal;
    white-space: nowrap;
}

.qat {
    display: flex;
    align-items: center;
    gap: 8px;
    margin-left: 44px;
}

.qat button {
    padding: 3px 10px 3px 8px;
    border: 1px solid #777;
    border-left: 0;
    border-radius: 0 12px 12px 0;
    background: #4c4c4e;
}

.winbtns {
    justify-self: end;
    align-self: start;
    display: flex;
    width: 105px;
    height: 19px;
    border: 1px solid #333;
    border-top: 0;
    border-radius: 0 0 5px 5px;
    background: linear-gradient(#a8c0c8, #587c88 50%, #7aa0ac);
}

.winbtns button {
    flex: 1;
    display: flex;
    align-items: center;
    justify-content: center;
    padding-top: 4px;
    border-right: 1px solid #333;
}

.office {
    position: absolute;
    left: 9px;
    top: 7px;
    z-index: 2;
    width: 37px;
    height: 37px;
    display: flex;
    align-items: center;
    justify-content: center;
    border-radius: 50%;
    border: 1px solid #889;
    background: radial-gradient(circle at 50% 40%, #fff 30%, #d8dce4 65%, #a8b0c0);
}

.tabs {
    height: 28px;
    display: flex;
    gap: 1px;
    padding: 2px 76px 0 45px;
    border-top: 1px solid #1a2a3a;
    background: #bfdbff;
}

.tabs a {
    padding: 3px 14px;
}

.tabs .on {
    border: 1px solid #9cbce4;
    border-bottom: 0;
    border-radius: 3px 3px 0 0;
    padding: 2px 13px;
    background: #eaf2fc;
}

.tabs .q {
    width: 13px;
    height: 13px;
    margin: 4px 0 0 auto;
    border-radius: 50%;
    background: #2f6fd0;
    box-shadow: 0 0 0 1px #fff, 0 0 0 2px #5a7cae;
    color: #fff;
    font-weight: bold;
    font-size: 11px;
    line-height: 13px;
    text-align: center;
}

.ribbon {
    height: 105px;
    display: flex;
    gap: 3px;
    padding: 1px 3px;
    border-top: 1px solid #9cbce4;
    border-bottom: 2px solid #a6e4f0;
    background: linear-gradient(#dbe7f5, #c9daee 16px, #d6e4f4 75%, #e3effc);
}

.group {
    flex: none;
    display: flex;
    flex-direction: column;
    border: 1px solid #a9c3e2;
    border-radius: 3px;
    overflow: hidden;
    white-space: nowrap;
}

.group>p {
    position: relative;
    flex: none;
    height: 19px;
    line-height: 18px;
    text-align: center;
    background: #c1d8f0;
    color: #3e6aaa;
}

.clip { width: 73px; }
.font { width: 150px; }
.align { width: 113px; }
.num { width: 88px; }
.style { width: 116px; }
.cells { width: 68px; }
.edit { width: 124px; }

.dlg {
    position: absolute;
    right: 5px;
    top: 3px;
    width: 7px;
    height: 7px;
    border: 1px solid #7a9ac8;
    border-width: 1px 0 0 1px;
    background: linear-gradient(#5a7cae, #5a7cae) 100% 100% / 4px 4px no-repeat;
}

.body {
    flex: 1;
    min-height: 0;
    display: flex;
    padding: 3px 3px 0;
}

.col {
    flex-direction: column;
    gap: 3px;
}

.align .col {
    gap: 4px;
}

.line {
    display: flex;
    flex: none;
    gap: 4px;
    height: 21px;
}

.between {
    justify-content: space-between;
    gap: 0;
}

.line.tall {
    height: 25px;
    gap: 1px;
}

.line select {
    flex: 1;
    min-width: 0;
    padding: 0 3px;
    color: #000;
    border: 1px solid #b3cbe8;
    background: conic-gradient(from -45deg at 50% 100%, #5a7cae 90deg, transparent 0) calc(100% - 4px) 10px / 6px 3px no-repeat, #eaf2fc;
}

.line .size {
    flex: none;
    width: 47px;
}

.set {
    display: flex;
    border: 1px solid #93afd4;
    border-radius: 3px;
    background: linear-gradient(#dbe8f7, #c6d9ef);
    overflow: hidden;
}

.set button {
    width: 22px;
    display: flex;
    align-items: center;
    justify-content: center;
    gap: 2px;
    color: #222;
    line-height: 19px;
}

.set button+button {
    border-left: 1px solid #b6cce8;
}

.set .wide {
    width: 32px;
    gap: 4px;
}

.set b {
    font: bold 14px/19px "Liberation Serif", serif;
}

.set .lg {
    font-size: 16px;
}

.up {
    align-self: flex-start;
    margin: 4px 0 0 -2px;
    border-top: 0;
    border-bottom: 3px solid #3a5ca8;
}

.raise {
    align-self: flex-start;
    margin: 4px 0 0 -1px;
}

.set .hot,
.hot {
    background: linear-gradient(#fbdca0, #fcb650 50%, #fdd27a);
}

.grow {
    flex: 1;
}

.grow button {
    flex: 1;
}

.grow .wide {
    flex: none;
}

.fc {
    width: 16px;
    height: 17px;
    border-bottom: 4px solid #e00010;
    font: bold 15px/14px "Liberation Serif", serif;
    color: #2a4a90;
    text-align: center;
}

.wen {
    display: flex;
    flex-direction: column;
    font-size: 11px;
    line-height: 11px;
    color: #2a50b0;
}

.wen small {
    font-size: 8px;
    line-height: 8px;
    color: #000;
}

.dec {
    display: flex;
    flex-direction: column;
    font: 9px/9px "Liberation Sans", sans-serif;
    text-align: right;
}

.dec s {
    text-decoration: none;
    color: #2a60c8;
}

.clip .body {
    gap: 10px;
    padding-left: 9px;
}

.big {
    display: flex;
    flex-direction: column;
    align-items: center;
    width: 28px;
}

.big>svg {
    margin: 2px 0 3px;
}

.big>.ar {
    margin-top: 8px;
}

.stack {
    display: flex;
    flex-direction: column;
    gap: 6px;
    padding-top: 2px;
}

.list {
    display: flex;
    flex-direction: column;
    gap: 6px;
}

.list button {
    display: flex;
    align-items: center;
    gap: 4px;
    height: 16px;
    color: #1e3f7c;
}

.style .list,
.cells .list {
    padding-left: 5px;
}

.edit .body {
    gap: 10px;
    padding-left: 7px;
}

.sum {
    font: bold 16px/16px "Liberation Serif", serif;
    width: 14px;
    color: #000;
}

.sort {
    width: 38px;
}

.pick {
    display: flex;
    align-items: center;
    gap: 3px;
}

.az {
    display: flex;
    align-items: center;
    height: 36px;
}

.az b {
    display: block;
    font: bold 17px/14px "Liberation Serif", serif;
    color: #3a5ca8;
}

.az b+b {
    color: #a82828;
}

.warn {
    height: 44px;
    display: flex;
    align-items: center;
    gap: 11px;
    padding: 0 4px;
    border: solid #c3d9f3;
    border-width: 7px 0 4px 2px;
    background: linear-gradient(#fff, #e4f1fd);
    box-shadow: inset 0 0 0 1px #9ebbe0;
}

.warn button {
    width: 70px;
    height: 21px;
    border: 1px solid #9ebbe0;
    background: #fff;
}

.formula {
    flex: none;
    height: 21px;
    display: flex;
    border: 1px solid #7a9cc8;
    background: #fff;
    color: #000;
    font: 15px/18px "Noto Sans CJK SC", sans-serif;
}

.formula .en {
    font: 13px/18px "Liberation Mono", monospace;
}

.name input {
    text-align: center;
}

.formula .name {
    flex: none;
    display: flex;
    align-items: center;
    width: 160px;
    padding: 0;
    background: #fff;
    font: 16px/19px "Liberation Serif", serif;
}

.formula .name input {
    width: 146px;
    height: 19px;
}

.name .ar {
    border-width: 4px;
    border-bottom: 0;
    border-top-color: #000;
}

.fx {
    width: 77px;
    height: 19px;
    padding-right: 5px;
    border-right: 1px solid #7a9cc8;
    border-radius: 10px 0 0 10px;
    background: radial-gradient(circle at 9px 9px, #fff 1px, #a8b8d0 4px, transparent 5px), linear-gradient(#eaf2fc, #b6cdea);
    font: bold 14px/17px "Liberation Serif", serif;
    text-align: right;
    color: #445;
}

.formula p {
    padding-left: 11px;
    white-space: nowrap;
}

/* sheet */
.sheet {
    position: relative;
    flex: 1;
    min-height: 0;
    overflow: hidden;
    border-top: 2px solid #c3d9f3;
    background: #fff;
    color: #000;
}

table {
    width: 100%;
    table-layout: fixed;
    border-collapse: separate;
    border-spacing: 0;
}

.c0 { width: 34px; }
.ca { width: 58px; }
.cb { width: 37px; }
.cc { width: 166px; }
.cd { width: 31px; }
.ce { width: 81px; }
.cf { width: 54px; }
.cg { width: 49px; }
.ch { width: 89px; }
.ci { width: 138px; }

th {
    border-right: 1px solid #a9bfd9;
    border-bottom: 1px solid #a9bfd9;
    background: #e4ecf7;
    font: 16px/18px "Liberation Serif", serif;
    color: #333c48;
}

thead th {
    height: 20px;
    border-top: 1px solid #7a9cc8;
    background: linear-gradient(#f4f8fc, #d3dcea);
}

thead .sel {
    border-right-color: #f0a850;
    border-bottom-color: #f0a850;
    background: linear-gradient(#f9d9a0, #f0be5c);
}

thead .corner {
    background: linear-gradient(135deg, transparent 60%, #e8f0fa 60%) 18px 5px / 12px 10px no-repeat, #a9c4e9;
}

tbody th {
    height: 40px;
    vertical-align: bottom;
    line-height: 16px;
}

.short th { height: 34px; }
.flow th { height: 45px; }
.rest th { height: 80px; }

.cur th {
    background: #ffcf86;
    border-color: #f0a850;
}

td {
    border-right: 1px solid #000;
    border-bottom: 1px solid #000;
    text-align: center;
    vertical-align: middle;
    font: bold 16px/19px "Liberation Serif", "Noto Sans CJK SC", serif;
}

.short td {
    font-weight: normal;
}

.short .blue {
    vertical-align: top;
    padding-top: 1px;
    font-weight: bold;
    color: #0000d0;
}

.blue,
.bold {
    font-size: 17px;
}

.txt {
    padding-left: 2px;
    text-align: left;
    font: bold 14px/18px "Noto Sans CJK SC", sans-serif;
    white-space: nowrap;
}

.txt .en {
    font: bold 12px/18px "Liberation Mono", monospace;
}

.active {
    background: #ff0;
    box-shadow: inset 0 0 0 1px #fff, inset 0 0 0 2px #202080;
}

.mark {
    position: absolute;
    left: 233px;
    top: 125px;
    width: 214px;
    height: 52px;
    border: 2px solid #e01010;
    box-shadow: 3px 3px 4px rgba(0, 0, 0, 0.4), inset 3px 3px 4px rgba(0, 0, 0, 0.4);
}

/* sheet tabs */
.sheets {
    height: 17px;
    display: flex;
    background: #cfe0f5;
    border-top: 1px solid #8aa8d0;
    font: 14px/16px "Noto Sans CJK SC", sans-serif;
    white-space: nowrap;
}

.sheets .en {
    font: 11px/16px "Liberation Mono", monospace;
}

.sheets a {
    flex: none;
    width: 79px;
    padding-left: 9px;
    color: #1d4a8c;
    background: linear-gradient(120deg, transparent 3px, #8aa8d0 3px 4px, transparent 4px);
}

.sheets .on {
    width: 44px;
    padding-left: 8px;
    background: #fff;
}

.sheets .cut {
    width: 35px;
}

.hscroll {
    flex: 1;
    display: flex;
    align-items: center;
    background: #7897c4;
}

.split {
    width: 7px;
    height: 16px;
    border: 1px solid #7897c4;
    background: #eaf2fc;
}

.la {
    margin: 0 10px 0 6px;
    border: 4px solid transparent;
    border-right: 5px solid #33507c;
    border-left: 0;
}

.hthumb {
    width: 26px;
    height: 14px;
    border: 1px solid #eef;
    background: repeating-linear-gradient(90deg, #667 0 1px, transparent 1px 2px) center / 8px 7px no-repeat, linear-gradient(#eef0f4, #b4bccc);
}

.status {
    height: 23px;
    display: flex;
    border-top: 1px solid #5a7cae;
    background: linear-gradient(#d8e6f8, #c0d6f2 45%, #a9c6ec 50%, #c8dcf6);
    line-height: 23px;
}

.ready {
    width: 40px;
    padding-left: 7px;
    border-right: 1px solid #9ab4d8;
}

.zoom {
    display: flex;
    align-items: center;
    width: 268px;
    margin-left: auto;
    padding-left: 5px;
    border-left: 1px solid #eef;
    background: linear-gradient(#9fc0ec, #7fa3d8 50%, #6c92cc 55%, #8fb4e4);
}

.views {
    display: flex;
    height: 19px;
    border: 1px solid #d6e4f6;
    border-radius: 2px;
    background: #c8daf2;
}

.views button {
    width: 18px;
    display: flex;
    align-items: center;
    justify-content: center;
}

.zoom>span {
    width: 50px;
    padding-left: 10px;
}

.minus {
    width: 16px;
    height: 16px;
    border: 1px solid #44608c;
    border-radius: 50%;
    background: linear-gradient(#345, #345) center / 8px 2px no-repeat, #e4edf9;
}

.zoom input {
    width: 100px;
    height: 16px;
    background: linear-gradient(#e4edf9, #e4edf9) center / 100% 1px no-repeat;
}

.zoom input::-webkit-slider-thumb {
    appearance: none;
    width: 9px;
    height: 13px;
    border: 1px solid #44608c;
    border-radius: 1px 1px 5px 5px;
    background: #dfe9f7;
}
```
FILE: script.js
```
let batches = [
    ['pln7b plane h', 'sig8t signal h', 'pln9b plane h', 'sig10t signal h', 'pln11b plane h'],
    ['ss.etch'],
    ['ss signal h', 'bs green', 'bo white h'],
    ['drl drill', 'rout work g'],
    ['1slotdrl', 'tp', 'bp', 'gd1 plain h', 'gg1', 'gm1', 'ydkdrl', 'cvia', 'datecode-pte', 'dwk', 'dwkby', 'biaozhu', 'd',
        'to.d plain h', 'ts.d', 'cs.d plain h', 'pln2t.d plain h', 'sig3b.d plain h', 'pln4t.d plain h', 'sig5b.d plain h',
        'pln6t.d plain h', 'pln7b.d plain h', 'sig8t.d plain h', 'pln9b.d plain h', 'sig10t.d plain h', 'pln11b.d plain h',
        'ss.d plain h', 'bs.d', 'bo.d plain h', 'drl.d', 'slotdrl.d', 'rout.d', 'bp.d', 'gd1.d plain h', 'gg1.d', 'gm1.d shown', 'tp.d']
];

// h : hand, g : grid
let icons = {
    h: '<svg width="8" height="8" viewBox="0 0 8 8"><path d="M4 0h1v2h3v2H6v3H5v1H1V7H0V4h1V3h2V2h1z"/></svg>',
    g: '<svg width="5" height="6" viewBox="0 0 5 6"><path fill="none" stroke="#000" d="M.5.5h4v5h-4zM0 3h5M2.500 0v6"/></svg>'
};

let view = document.querySelector('.view');

batches.forEach(function (batch) {
    let box = document.createElement('div');
    box.className = 'batch';
    batch.forEach(function (item) {
        let [name, kind, icon] = item.split(' ');
        let row = document.createElement('label');
        row.className = 'layer ' + (kind || 'plain');
        row.innerHTML = '<input type="checkbox"><span class="swatch"></span><span class="name">' + name + (icons[icon] || '') + '</span>';
        box.appendChild(row);
    });
    view.appendChild(box);
});
```
